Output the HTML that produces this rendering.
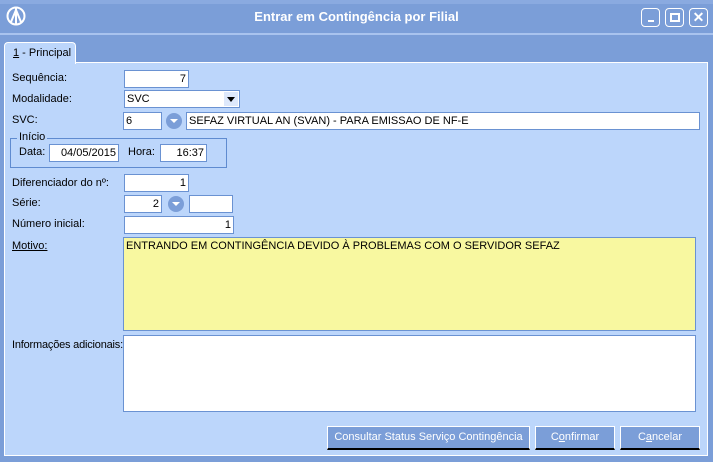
<html><head><style>
*{margin:0;padding:0;box-sizing:border-box}
body{width:713px;height:462px;background:#7b9ed8;font-family:"Liberation Sans",sans-serif;font-size:11px;position:relative;overflow:hidden}
.a{position:absolute;white-space:nowrap}
.in{position:absolute;background:#fff;border:1px solid #6a92d2;height:18px;line-height:16px;padding:0 2px;font-size:11px;white-space:nowrap;overflow:hidden}
.r{text-align:right}
.l{position:absolute;font-size:11px;color:#000;white-space:nowrap}
.circ{position:absolute;width:16px;height:16px;border-radius:50%;background:#7b9ed8}
.circ:after{content:"";position:absolute;left:4px;top:6px;border-left:4px solid transparent;border-right:4px solid transparent;border-top:4px solid #fff}
.btn{position:absolute;top:426px;height:24px;background:#7b9ed8;border:1px solid #fff;border-bottom:2px solid #000;color:#fff;text-align:center;line-height:21px;font-size:11px;white-space:nowrap}
.wb{position:absolute;top:8px;width:19px;height:19px;border:1px solid #fff;border-radius:4px}
</style></head><body>
<div class="a" style="left:0;top:0;width:713px;height:4px;background:#8aaae0"></div>
<div class="a" style="left:0;top:33px;width:713px;height:2px;background:#a9c3ee"></div>
<svg class="a" style="left:6px;top:5px" width="20" height="22" viewBox="0 0 20 22"><circle cx="10" cy="11" r="8.5" fill="none" stroke="#fff" stroke-width="2"/><path d="M10 3 L10 19 M5 17 L10 5 L15 17" stroke="#fff" stroke-width="2" fill="none"/></svg>
<div class="a" style="left:0;top:9px;width:713px;text-align:center;color:#fff;font-weight:bold;font-size:13px">Entrar em Contingência por Filial</div>
<div class="wb" style="left:641px"><div class="a" style="left:6px;top:11px;width:6px;height:2px;background:#fff"></div></div>
<div class="wb" style="left:665px"><div class="a" style="left:4px;top:4px;width:10px;height:9px;border:2px solid #fff"></div></div>
<div class="wb" style="left:689px;color:#fff;font-size:14px;font-weight:bold;text-align:center;line-height:17px">✕</div>
<div class="a" style="left:4px;top:42px;width:72px;height:22px;background:#bcd6fb;border:1px solid #fff;border-bottom:none;border-radius:4px 4px 0 0;padding:4px 0 0 8px;z-index:2"><u>1</u> - Principal</div>
<div class="a" style="left:4px;top:62px;width:704px;height:394px;background:#bcd6fb;border:1px solid #fff"></div>
<div class="l" style="left:12px;top:72px">Sequência:</div>
<div class="in r" style="left:124px;top:70px;width:65px">7</div>
<div class="l" style="left:12px;top:93px">Modalidade:</div>
<div class="in" style="left:124px;top:90px;width:116px">SVC<div class="a" style="left:99px;top:1px;width:14px;height:14px;background:#dde8fb"></div><div class="a" style="left:102px;top:6px;border-left:4px solid transparent;border-right:4px solid transparent;border-top:5px solid #000"></div></div>
<div class="l" style="left:12px;top:114px">SVC:</div>
<div class="in" style="left:123px;top:112px;width:39px">6</div>
<div class="circ" style="left:166px;top:113px"></div>
<div class="in" style="left:186px;top:112px;width:514px">SEFAZ VIRTUAL AN (SVAN) - PARA EMISSAO DE NF-E</div>
<div class="a" style="left:10px;top:138px;width:217px;height:30px;border:1px solid #5f8bd0"></div>
<div class="l" style="left:17px;top:131px;background:#bcd6fb;padding:0 2px">Início</div>
<div class="l" style="left:19px;top:146px">Data:</div>
<div class="in r" style="left:49px;top:144px;width:70px">04/05/2015</div>
<div class="l" style="left:128px;top:146px">Hora:</div>
<div class="in r" style="left:160px;top:144px;width:47px">16:37</div>
<div class="l" style="left:12px;top:177px">Diferenciador do nº:</div>
<div class="in r" style="left:124px;top:174px;width:65px">1</div>
<div class="l" style="left:12px;top:197px">Série:</div>
<div class="in r" style="left:124px;top:195px;width:38px">2</div>
<div class="circ" style="left:168px;top:196px"></div>
<div class="in" style="left:189px;top:195px;width:44px"></div>
<div class="l" style="left:12px;top:218px">Número inicial:</div>
<div class="in r" style="left:124px;top:216px;width:110px">1</div>
<div class="l" style="left:12px;top:240px"><u>Motivo:</u></div>
<div class="in" style="left:123px;top:237px;width:573px;height:94px;background:#f8f8a0;line-height:16px">ENTRANDO EM CONTINGÊNCIA DEVIDO À PROBLEMAS COM O SERVIDOR SEFAZ</div>
<div class="l" style="left:12px;top:339px;letter-spacing:-0.2px">Informações adicionais:</div>
<div class="in" style="left:123px;top:335px;width:573px;height:77px"></div>
<div class="btn" style="left:327px;width:203px">Consultar Status Serviço Contingência</div>
<div class="btn" style="left:535px;width:80px">C<u>o</u>nfirmar</div>
<div class="btn" style="left:620px;width:80px">C<u>a</u>ncelar</div>
</body></html>
